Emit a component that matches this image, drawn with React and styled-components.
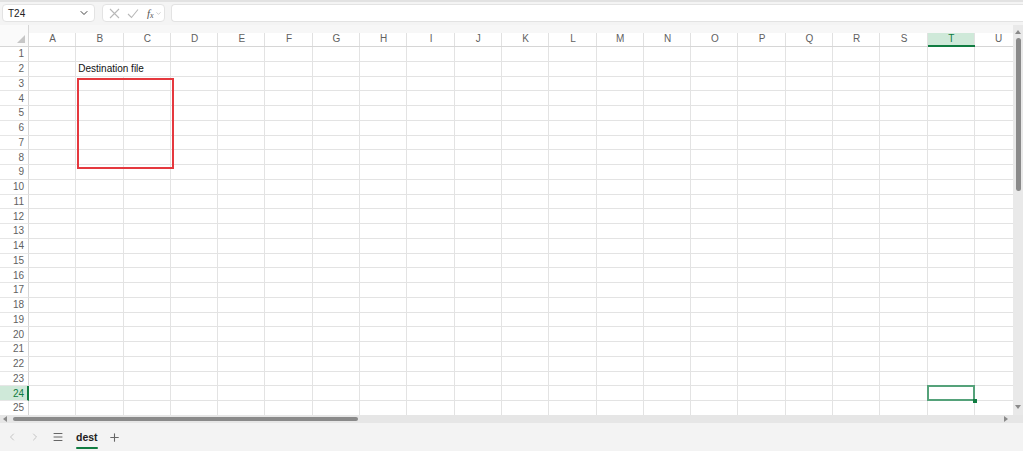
import React from 'react'
import styled, { createGlobalStyle, css } from 'styled-components'
import { ChevronDown, ChevronLeft, ChevronRight, Menu, Plus } from 'lucide-react'

const colWidth = 47.3
const rowHeight = 14.75
const green = '#107c41'
const columns = 'ABCDEFGHIJKLMNOPQRSTU'.split('')
const rows = Array.from({ length: 25 }, (_, i) => i + 1)
const selected = { col: 'T', row: 24 }
const values = { B2: 'Destination file' }

const GlobalStyle = createGlobalStyle`
    body {
        margin: 0;
        font-family: "Liberation Sans", Arial, sans-serif;
        background: #fff;
    }
`

const Page = styled.div`
    width: 1023px;
    height: 451px;
    display: flex;
    flex-direction: column;
    overflow: hidden;
`

const FormulaBar = styled.div`
    height: 25px;
    box-sizing: border-box;
    border-top: 2px solid #e2e2e2;
    background: #f4f4f4;
    display: flex;
    align-items: flex-start;
    padding: 2px 0 0 2px;
    gap: 6px;
`

const Box = styled.div`
    height: 18px;
    box-sizing: border-box;
    background: #fff;
    border: 1px solid #e3e3e3;
    border-radius: 4px;
    display: flex;
    align-items: center;
`

const NameBox = styled(Box)`
    width: 93px;
    padding: 0 4px 0 5px;
    justify-content: space-between;
    font-size: 10px;
    color: #222;
    margin-right: 1px;
`

const FnBox = styled(Box)`
    width: 63px;
    padding: 0 0 0 6px;
    gap: 7px;
    color: #b8b8b8;
`

const FormulaInput = styled(Box)`
    flex: 1;
    border-radius: 4px 0 0 4px;
    border-right: none;
`

const Fx = styled.span`
    font-family: "Liberation Serif", serif;
    font-style: italic;
    font-size: 11px;
    color: #555;
    margin-left: 1px;

    sub {
        font-size: 8px;
        vertical-align: -1px;
    }
`

const Body = styled.div`
    flex: 1;
    display: flex;
    min-height: 0;
`

const Sheet = styled.div`
    position: relative;
    flex: 1;
    display: grid;
    grid-template-columns: 29px repeat(${columns.length}, ${colWidth}px);
    grid-template-rows: 22px repeat(${rows.length}, ${rowHeight}px);
    overflow: hidden;
    background: #fff;
    font-size: 10px;
`

const Corner = styled.div`
    position: relative;
    box-sizing: border-box;
    border-right: 1px solid #d6d6d6;
    border-bottom: 1px solid #d6d6d6;
    background: #fafafa;

    &::after {
        content: '';
        position: absolute;
        right: 3px;
        bottom: 3px;
        border-left: 8px solid transparent;
        border-bottom: 8px solid #c6c6c6;
    }
`

const ColHeader = styled.div`
    position: relative;
    box-sizing: border-box;
    display: flex;
    align-items: flex-end;
    justify-content: center;
    padding-bottom: 2px;
    color: #616161;
    background: linear-gradient(#f7f7f7 0 8px, #fff 8px);
    border-bottom: 1px solid #d6d6d6;

    &::after {
        content: '';
        position: absolute;
        right: 0;
        top: 8px;
        bottom: 0;
        width: 1px;
        background: #e1e1e1;
    }

    ${props => props.$active && css`
        color: ${green};
        background: linear-gradient(#f7f7f7 0 8px, #cfe9d9 8px);
        border-bottom: 2px solid ${green};
        padding-bottom: 1px;
    `}
`

const RowHeader = styled.div`
    box-sizing: border-box;
    display: flex;
    align-items: center;
    justify-content: flex-end;
    padding-right: 4px;
    color: #616161;
    background: #fff;
    border-right: 1px solid #d6d6d6;
    border-bottom: 1px solid #e6e6e6;

    ${props => props.$active && css`
        color: ${green};
        background: #cfe9d9;
        border-right: 2px solid ${green};
        padding-right: 3px;
    `}
`

const Cell = styled.div`
    position: relative;
    box-sizing: border-box;
    border-right: ${props => props.$spill ? 'none' : '1px solid #e3e3e3'};
    border-bottom: 1px solid #e3e3e3;
    display: flex;
    align-items: center;
    padding-left: 2px;
    white-space: nowrap;
    color: #111;
    z-index: ${props => props.$spill || props.$selected ? 1 : 'auto'};

    ${props => props.$selected && css`
        &::after {
            content: '';
            position: absolute;
            left: -1px;
            top: -1px;
            right: -1px;
            bottom: -1px;
            border: 2px solid #55a27a;
        }
        &::before {
            content: '';
            position: absolute;
            right: -3px;
            bottom: -3px;
            width: 4px;
            height: 4px;
            background: ${green};
            z-index: 2;
        }
    `}
`

const Marker = styled.div`
    position: absolute;
    left: 77px;
    top: 53px;
    width: 97px;
    height: 91px;
    box-sizing: border-box;
    border: 2px solid #e5383e;
    pointer-events: none;
`

const VScroll = styled.div`
    width: 10px;
    background: #e9e9e9;
    display: flex;
    flex-direction: column;
    align-items: center;
`

const Thumb = styled.div`
    background: #8a8a8a;
    border-radius: 3px;
    ${props => props.$vertical ? css`
        width: 5px;
        height: 153px;
        margin-top: 4px;
    ` : css`
        height: 4px;
        width: 345px;
        margin-left: 6px;
    `}
`

const Arrow = styled.span`
    width: 0;
    height: 0;
    border: 3px solid transparent;
    ${props => props.$dir === 'up' && css`
        border-bottom: 4px solid #8a8a8a;
        margin-top: 2px;
    `}
    ${props => props.$dir === 'down' && css`
        border-top: 4px solid #8a8a8a;
        margin-top: auto;
        margin-bottom: 3px;
    `}
    ${props => props.$dir === 'left' && css`
        border-right: 4px solid #8a8a8a;
    `}
    ${props => props.$dir === 'right' && css`
        border-left: 4px solid #8a8a8a;
        margin-left: auto;
        margin-right: 12px;
    `}
`

const HScroll = styled.div`
    height: 8px;
    background: #e6e6e6;
    display: flex;
    align-items: center;
`

const TabBar = styled.div`
    height: 28px;
    background: #f3f3f3;
    display: flex;
    align-items: center;
`

const NavButton = styled.span`
    width: ${props => props.$w || 23}px;
    display: flex;
    justify-content: center;
    color: ${props => props.$muted ? '#c4c4c4' : '#666'};
`

const Tab = styled.div`
    position: relative;
    margin: 0 5px 0 7px;
    font-size: 10.5px;
    font-weight: bold;
    color: #222;

    &::after {
        content: '';
        position: absolute;
        left: 0;
        right: 0;
        bottom: -6px;
        height: 2px;
        border-radius: 1px;
        background: ${green};
    }
`

function CrossIcon() {
    return (
        <svg width="11" height="11" viewBox="0 0 11 11" fill="none" stroke="currentColor" strokeWidth="1.1">
            <path d="M1 1 L10 10 M10 1 L1 10" />
        </svg>
    )
}

function CheckIcon() {
    return (
        <svg width="12" height="11" viewBox="0 0 12 11" fill="none" stroke="currentColor" strokeWidth="1.1">
            <path d="M1 6 L4.5 9.5 L11 1.5" />
        </svg>
    )
}

export default function App() {
    return (
        <Page>
            <GlobalStyle />
            <FormulaBar>
                <NameBox>
                    <span>T24</span>
                    <ChevronDown size={12} strokeWidth={2} color="#444" />
                </NameBox>
                <FnBox>
                    <CrossIcon />
                    <CheckIcon />
                    <Fx>f<sub>x</sub></Fx>
                    <ChevronDown size={7} strokeWidth={2} color="#aaa" style={{ marginLeft: -6 }} />
                </FnBox>
                <FormulaInput />
            </FormulaBar>
            <Body>
                <Sheet>
                    <Corner />
                    {columns.map(c => (
                        <ColHeader key={c} $active={c === selected.col}>{c}</ColHeader>
                    ))}
                    {rows.map(r => (
                        <React.Fragment key={r}>
                            <RowHeader $active={r === selected.row}>{r}</RowHeader>
                            {columns.map(c => {
                                const ref = c + r
                                return (
                                    <Cell
                                        key={ref}
                                        $spill={!!values[ref]}
                                        $selected={c === selected.col && r === selected.row}
                                    >
                                        {values[ref]}
                                    </Cell>
                                )
                            })}
                        </React.Fragment>
                    ))}
                    <Marker />
                </Sheet>
                <VScroll>
                    <Arrow $dir="up" />
                    <Thumb $vertical />
                    <Arrow $dir="down" />
                </VScroll>
            </Body>
            <HScroll>
                <Arrow $dir="left" />
                <Thumb />
                <Arrow $dir="right" />
            </HScroll>
            <TabBar>
                <NavButton $muted><ChevronLeft size={12} /></NavButton>
                <NavButton $muted><ChevronRight size={12} /></NavButton>
                <NavButton><Menu size={12} /></NavButton>
                <Tab>dest</Tab>
                <NavButton $w={24}><Plus size={13} /></NavButton>
            </TabBar>
        </Page>
    )
}
